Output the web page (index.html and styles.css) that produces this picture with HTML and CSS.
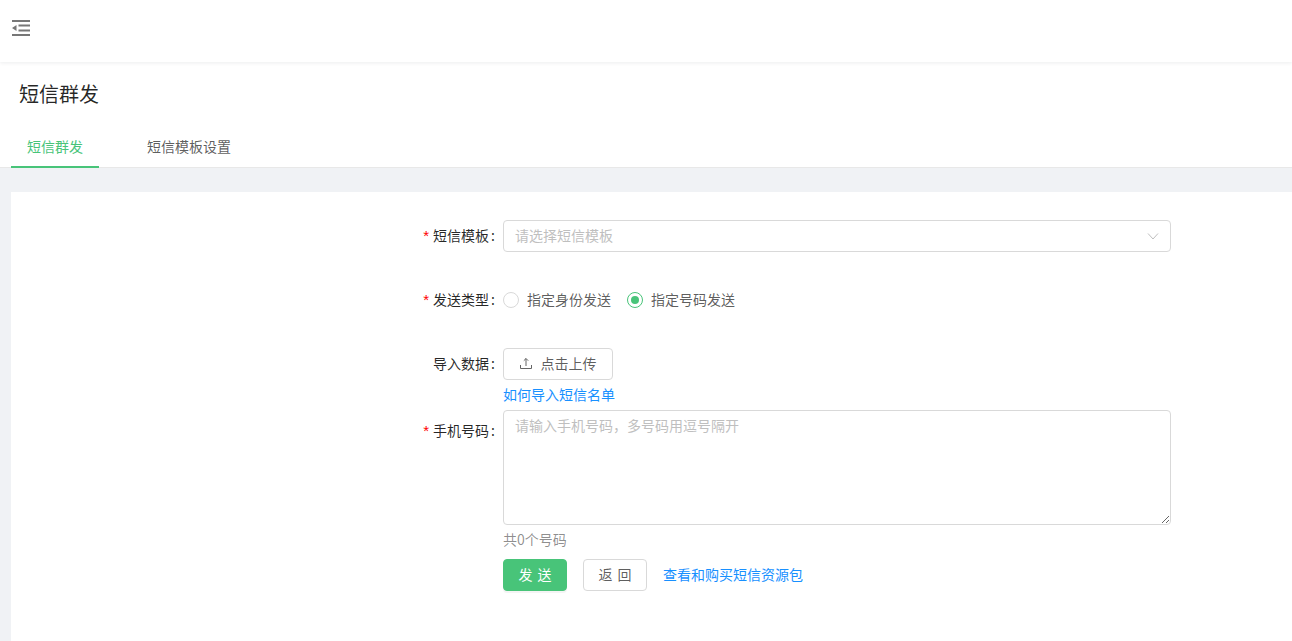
FILE: index.html
```html
<!DOCTYPE html>
<html lang="zh-CN">
<head>
<meta charset="utf-8">
<title>短信群发</title>
<link rel="stylesheet" href="styles.css">
</head>
<body>
<header class="topbar">
  <svg class="menu-icon" width="18" height="16" viewBox="0 0 18 16"><path d="M0 0h18v2H0zM0 14h18v2H0zM6.500 4.500H18v2H6.500zM6.500 9.500H18v2H6.500zM4.500 5v6L0 8z" fill="#777"/></svg>
</header>
<section class="page-head">
  <h1 class="title">短信群发</h1>
  <nav class="tabs">
    <a class="tab active">短信群发</a>
    <a class="tab">短信模板设置</a>
  </nav>
</section>
<main class="content">
  <form class="card">
    <div class="row">
      <label class="label"><span class="req">*</span>短信模板<span class="colon">:</span></label>
      <div class="control">
        <div class="select"><span class="placeholder">请选择短信模板</span>
          <svg width="12" height="12" viewBox="0 0 12 12"><path d="M1 3.500l5 5.500 5-5.500" fill="none" stroke="#bfbfbf" stroke-width="1"/></svg>
        </div>
      </div>
    </div>
    <div class="row">
      <label class="label"><span class="req">*</span>发送类型<span class="colon">:</span></label>
      <div class="control radios">
        <span class="radio"><i class="dot"></i><span class="radio-text">指定身份发送</span></span>
        <span class="radio"><i class="dot on"></i><span class="radio-text">指定号码发送</span></span>
      </div>
    </div>
    <div class="row tight">
      <label class="label">导入数据<span class="colon">:</span></label>
      <div class="control">
        <button type="button" class="btn upload">
          <svg width="12" height="12" viewBox="0 0 12 12"><path d="M6 9V1.500M3.800 3.700L6 1.500l2.200 2.200M.5 8v3.500h11V8" fill="none" stroke="#666" stroke-width="1"/></svg>
          点击上传
        </button>
        <a class="link help">如何导入短信名单</a>
      </div>
    </div>
    <div class="row tight">
      <label class="label"><span class="req">*</span>手机号码<span class="colon">:</span></label>
      <div class="control">
        <textarea class="area" placeholder="请输入手机号码，多号码用逗号隔开"></textarea>
        <p class="count">共0个号码</p>
        <div class="actions">
          <button type="button" class="btn primary">发 送</button>
          <button type="button" class="btn">返 回</button>
          <a class="link action-link">查看和购买短信资源包</a>
        </div>
      </div>
    </div>
  </form>
</main>
</body>
</html>
```
FILE: styles.css
```css
* { box-sizing: border-box; }
html, body { height: 100%; }
body {
  margin: 0;
  display: flex;
  flex-direction: column;
  overflow: hidden;
  background: #f0f2f5;
  font: 14px/22px "Noto Sans CJK SC", "Liberation Sans", sans-serif;
  color: rgba(0, 0, 0, .65);
}
.topbar {
  height: 62px;
  flex: none;
  display: flex;
  padding: 20px 0 0 12px;
  background: #fff;
  box-shadow: 0 1px 4px rgba(0, 21, 41, .08);
  position: relative;
}
.menu-icon { display: block; }
.page-head {
  flex: none;
  height: 106px;
  padding-top: 16px;
  background: #fff;
  border-bottom: 1px solid #e8e8e8;
}
.title {
  margin: 0 0 0 19px;
  font-size: 20px;
  line-height: 32px;
  font-weight: 400;
  color: rgba(0, 0, 0, .85);
}
.tabs {
  display: flex;
  gap: 32px;
  margin: 21px 0 0 11px;
}
.tab {
  padding: 4px 16px 10px;
  height: 37px;
  line-height: 22px;
}
.tab.active {
  color: #48c479;
  border-bottom: 2px solid #48c479;
}
.content {
  flex: 1;
  padding: 24px 0 0 11px;
}
.card {
  height: 100%;
  padding-top: 28px;
  background: #fff;
}
.row {
  display: grid;
  grid-template-columns: 492px 668px;
  margin-bottom: 32px;
}
.row.tight { margin-bottom: 5px; }
.label {
  height: 32px;
  padding-right: 8px;
  text-align: right;
  line-height: 30px;
  color: rgba(0, 0, 0, .85);
}
.row.tight:last-child .label { padding-top: 5px; }
.req {
  margin-right: 4px;
  color: #f00;
  font-family: "Liberation Sans", sans-serif;
  font-size: 15px;
}
.colon { margin-left: 2px; }
.control { min-width: 0; }
.select {
  height: 32px;
  display: flex;
  align-items: center;
  justify-content: space-between;
  padding: 0 11px 0 11px;
  border: 1px solid #d9d9d9;
  border-radius: 4px;
}
.placeholder { color: #bfbfbf; margin-top: -2px; }
.radios {
  display: flex;
  align-items: center;
  gap: 16px;
  height: 32px;
}
.radio { display: flex; align-items: center; }
.radio-text { margin-top: -2px; }
.dot {
  width: 16px;
  height: 16px;
  margin-right: 8px;
  border: 1px solid #d9d9d9;
  border-radius: 50%;
  position: relative;
}
.dot.on { border-color: #48c479; }
.dot.on::after {
  content: "";
  position: absolute;
  inset: 3px;
  border-radius: 50%;
  background: #48c479;
}
.btn {
  display: inline-flex;
  align-items: center;
  justify-content: center;
  height: 32px;
  width: 64px;
  padding: 0 0 2px;
  border: 1px solid #d9d9d9;
  border-radius: 4px;
  background: #fff;
  color: rgba(0, 0, 0, .65);
  font: inherit;
  word-spacing: 2px;
}
.btn.upload {
  width: 110px;
  gap: 9px;
}
.btn.primary {
  border-color: #48c479;
  background: #48c479;
  color: #fff;
  box-shadow: 0 2px 0 rgba(0, 0, 0, .045);
}
.link { color: #1890ff; }
.help {
  display: block;
  margin-top: 3px;
  line-height: 22px;
  height: 22px;
}
.action-link { margin-top: -2px; }
.area {
  display: block;
  width: 100%;
  height: 115px;
  padding: 3px 11px;
  border: 1px solid #d9d9d9;
  border-radius: 4px;
  font: inherit;
  color: inherit;
  outline: none;
}
.area::placeholder { color: #bfbfbf; opacity: 1; }
.count {
  margin: 3px 0 0;
  height: 27px;
  line-height: 22px;
  color: rgba(0, 0, 0, .45);
}
.actions {
  display: flex;
  align-items: center;
  gap: 16px;
  margin-top: 4px;
}
```
